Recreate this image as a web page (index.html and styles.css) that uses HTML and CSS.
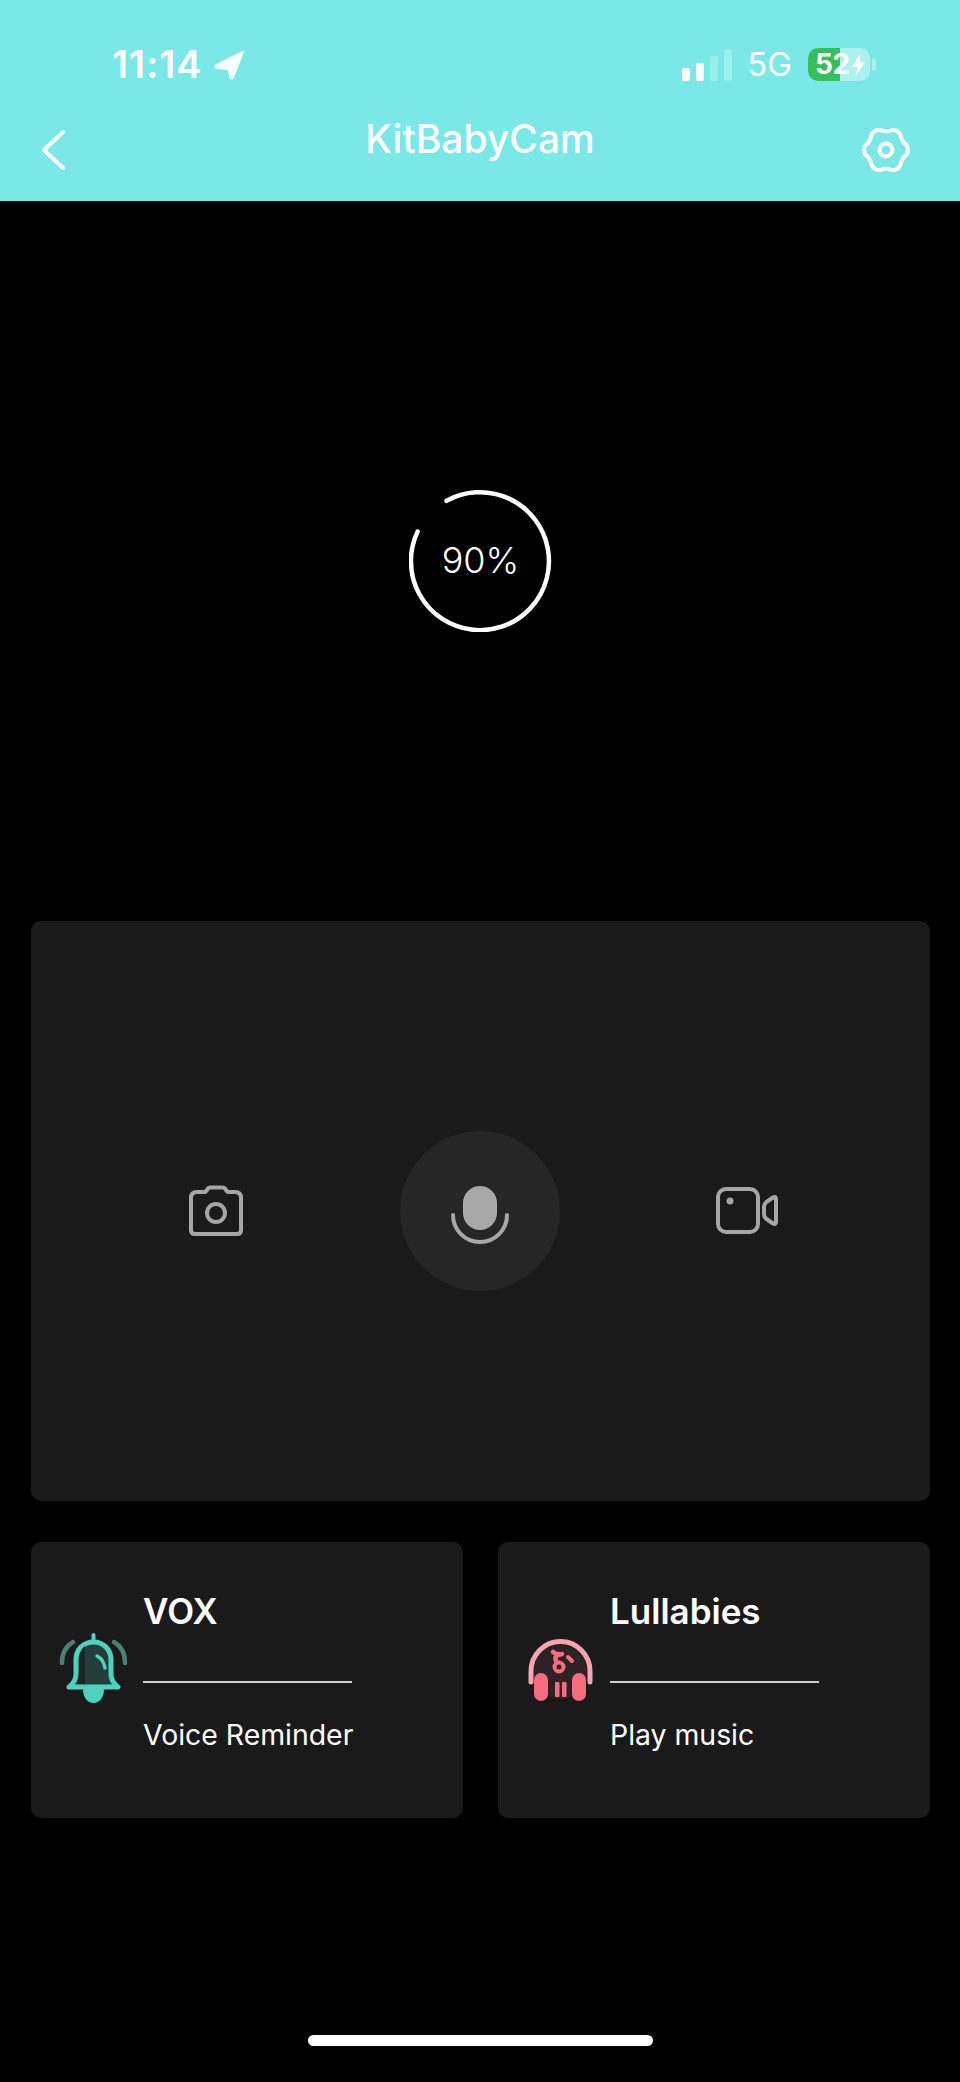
FILE: index.html
```html
<!DOCTYPE html>
<html lang="en">
<head>
<meta charset="utf-8">
<title>KitBabyCam</title>
<link rel="stylesheet" href="styles.css">
</head>
<body>
<div class="app">
  <header class="header">
    <div class="status">
      <div class="status-left">
        <span class="time">11:14</span>
        <svg class="loc" viewBox="0 0 32 30"><path d="M30 2 L3 15.5 Q1 17 3.5 18 L15.5 19 L17.5 27.5 Q18.500 29.500 20 27.500 Z" fill="#fff" stroke="#fff" stroke-width="2" stroke-linejoin="round"/></svg>
      </div>
      <div class="status-right">
        <div class="signal">
          <i class="bar b1"></i><i class="bar b2"></i><i class="bar b3 dim"></i><i class="bar b4 dim"></i>
        </div>
        <span class="net">5G</span>
        <div class="battery-wrap">
          <div class="battery">
            <div class="battery-fill"></div>
            <span class="battery-num">52</span>
            <svg class="bolt" viewBox="0 0 14 24"><path d="M9 0 L0 14 H6 L4 24 L14 9 H8 Z" fill="#fff"/></svg>
          </div>
          <i class="nub"></i>
        </div>
      </div>
    </div>
    <nav class="nav">
      <svg class="back" viewBox="0 0 26 44"><path d="M23 4 L4 22 L23 40" fill="none" stroke="#fff" stroke-width="4" stroke-linecap="round" stroke-linejoin="round"/></svg>
      <h1 class="title">KitBabyCam</h1>
      <svg class="gear" viewBox="0 0 48 48"><path d="M20.61 4.8 Q24 5.8 27.39 4.8 A8 8 0 0 1 38.94 11.47 Q40 14.75 42.32 17.33 A8 8 0 0 1 42.32 30.67 Q40 33.25 38.94 36.53 A8 8 0 0 1 27.39 43.2 Q24 42.2 20.61 43.2 A8 8 0 0 1 9.06 36.53 Q8 33.25 5.68 30.67 A8 8 0 0 1 5.68 17.33 Q8 14.75 9.06 11.47 A8 8 0 0 1 20.61 4.8Z" fill="none" stroke="#fff" stroke-width="4" stroke-linejoin="round"/><circle cx="24" cy="24" r="6.500" fill="none" stroke="#fff" stroke-width="4"/></svg>
    </nav>
  </header>

  <main class="main">
    <section class="ring-area">
      <div class="ring">
        <svg class="ring-svg" viewBox="0 0 144 144"><path d="M37.500 12.800 A69 69 0 1 1 8.600 43.600" fill="none" stroke="#fff" stroke-width="4.500" stroke-linecap="round"/></svg>
        <span class="ring-label">90%</span>
      </div>
    </section>

    <section class="panel">
      <svg class="cam" viewBox="0 0 60 60"><path d="M11 11 H18 Q20 11 21 9 Q22 6.500 25 6.500 H36 Q39 6.500 40 9 Q41 11 43 11 H49 Q55 11 55 17 V49 Q55 53 51 53 H9 Q5 53 5 49 V17 Q5 11 11 11Z" fill="none" stroke="#a6a6a6" stroke-width="4" stroke-linejoin="round"/><circle cx="30" cy="32" r="9" fill="none" stroke="#a6a6a6" stroke-width="4"/></svg>
      <div class="mic-btn">
        <svg class="mic" viewBox="0 0 64 64"><rect x="15" y="1" width="34" height="44" rx="17" fill="#a8a8a8"/><path d="M5 30 A27 27 0 0 0 59 30" fill="none" stroke="#a8a8a8" stroke-width="4" stroke-linecap="round"/></svg>
      </div>
      <svg class="vid" viewBox="0 0 66 60"><rect x="4" y="8" width="40" height="43" rx="8" fill="none" stroke="#a6a6a6" stroke-width="4"/><circle cx="16" cy="20" r="3.500" fill="#a6a6a6"/><path d="M50 26 Q50 23 52.500 21 L59 16.500 Q62 15 62 18 V41 Q62 44 59 42.500 L52.500 38 Q50 36 50 33 Z" fill="none" stroke="#a6a6a6" stroke-width="4" stroke-linejoin="round"/></svg>
    </section>

    <section class="cards">
      <article class="card">
        <svg class="card-icon" viewBox="0 0 80 80">
          <path d="M42.500 7 V14" stroke="#4fd1bd" stroke-width="4" stroke-linecap="round"/>
          <path d="M22 14 C15 18 11 26 11 35 M63 14 C70 18 74 26 74 35" fill="none" stroke="#4c7f76" stroke-width="4.500" stroke-linecap="round"/>
          <path d="M18 59 C22 56 25 52 25 46 V32 C25 21 33 14 42.500 14 C52 14 60 21 60 32 V46 C60 52 63 56 67 59 Z" fill="#233d39" stroke="#4fd1bd" stroke-width="5" stroke-linejoin="round"/>
          <path d="M28 32 C28 25 31 20 34 18 V56 H25 C27 52 28 48 28 44Z" fill="#1b2624"/>
          <path d="M46 28 C50 30 53 34 54 40" fill="none" stroke="#4fd1bd" stroke-width="3.500" stroke-linecap="round"/>
          <path d="M32 61 H53 C53 70 48 75 42.500 75 C37 75 32 70 32 61Z" fill="#4fd1bd"/>
        </svg>
        <div class="card-text">
          <h2 class="card-title">VOX</h2>
          <div class="card-rule"></div>
          <p class="card-sub">Voice Reminder</p>
        </div>
      </article>
      <article class="card">
        <svg class="card-icon" viewBox="0 0 80 80">
          <circle cx="42.500" cy="44" r="27" fill="#2e2226"/>
          <path d="M13 54 V43 A29.500 29.500 0 0 1 72 43 V54" fill="none" stroke="#f5a5b0" stroke-width="5" stroke-linecap="round"/>
          <rect x="16" y="45" width="14" height="28" rx="7" fill="#f56d81"/>
          <rect x="54" y="45" width="14" height="28" rx="7" fill="#f56d81"/>
          <rect x="37" y="54" width="4.500" height="15" rx="1" fill="#f56d81"/>
          <rect x="44" y="54" width="4.500" height="15" rx="1" fill="#f56d81"/>
          <path d="M35 24 Q40 28 44 26 M41 26 Q36 29 38 33" fill="none" stroke="#f56d81" stroke-width="4.500" stroke-linecap="round"/>
          <circle cx="41" cy="39" r="4.500" fill="none" stroke="#f56d81" stroke-width="4"/>
          <path d="M50 29 L54 33" stroke="#f56d81" stroke-width="4" stroke-linecap="round"/>
        </svg>
        <div class="card-text">
          <h2 class="card-title">Lullabies</h2>
          <div class="card-rule"></div>
          <p class="card-sub">Play music</p>
        </div>
      </article>
    </section>
  </main>

  <footer class="home"><div class="home-bar"></div></footer>
</div>
</body>
</html>
```

FILE: styles.css
```css
* { box-sizing: border-box; }

html, body {
  margin: 0;
  padding: 0;
  background: #000;
}

body {
  font-family: Inter, "Liberation Sans", sans-serif;
  color: #fff;
}

.app {
  width: 960px;
  height: 2082px;
  display: flex;
  flex-direction: column;
  overflow: hidden;
}

/* Header */
.header {
  height: 201px;
  flex: none;
  background: #7ae8e6;
  padding-top: 48px;
}

.status {
  height: 33px;
  display: flex;
  justify-content: space-between;
  align-items: center;
  padding: 0 84px 0 112px;
}

.status-left {
  display: flex;
  align-items: center;
  gap: 10px;
}

.time {
  font-size: 38px;
  line-height: 33px;
  font-weight: 600;
  letter-spacing: 1px;
}

.loc {
  width: 32px;
  height: 30px;
  display: block;
}

.status-right {
  display: flex;
  align-items: center;
}

.signal {
  display: flex;
  align-items: flex-end;
  gap: 6px;
  height: 33px;
}

.bar {
  display: block;
  width: 8px;
  border-radius: 2px;
  background: #fff;
}

.b1 { height: 13px; }
.b2 { height: 18px; }
.b3 { height: 25px; }
.b4 { height: 32px; }
.dim { opacity: 0.25; }

.net {
  margin-left: 15px;
  font-size: 33px;
  line-height: 33px;
  font-weight: 400;
}

.battery-wrap {
  margin-left: 16px;
  display: flex;
  align-items: center;
  gap: 2px;
}

.battery {
  position: relative;
  width: 62px;
  height: 33px;
  border-radius: 10px;
  overflow: hidden;
  background: rgba(255, 255, 255, 0.38);
  display: flex;
  align-items: center;
  padding-left: 7px;
}

.battery-fill {
  position: absolute;
  left: 0;
  top: 0;
  bottom: 0;
  width: 32px;
  background: #36bd5c;
}

.battery-num {
  position: relative;
  font-size: 28px;
  line-height: 33px;
  font-weight: 700;
  letter-spacing: -0.5px;
}

.bolt {
  position: relative;
  width: 13px;
  height: 22px;
  margin-left: 2px;
}

.nub {
  display: block;
  width: 4px;
  height: 12px;
  border-radius: 0 3px 3px 0;
  background: rgba(255, 255, 255, 0.38);
}

.nav {
  margin-top: 18px;
  height: 102px;
  display: grid;
  grid-template-columns: 1fr auto 1fr;
  align-items: center;
  padding: 0 40px;
}

.back {
  width: 26px;
  height: 44px;
  display: block;
}

.title {
  margin: 0 0 22px;
  font-size: 39px;
  line-height: 44px;
  font-weight: 500;
}

.gear {
  width: 48px;
  height: 48px;
  display: block;
  justify-self: end;
  margin-right: 10px;
}

/* Main */
.main {
  flex: 1;
  display: flex;
  flex-direction: column;
  padding: 0 30px 0 31px;
}

.ring-area {
  height: 720px;
  flex: none;
  display: flex;
  justify-content: center;
  align-items: center;
  padding-bottom: 2px;
}

.ring {
  position: relative;
  width: 144px;
  height: 144px;
  display: flex;
  align-items: center;
  justify-content: center;
}

.ring-svg {
  position: absolute;
  inset: 0;
  width: 144px;
  height: 144px;
}

.ring-label {
  font-size: 36px;
  line-height: 44px;
  font-weight: 300;
}

.panel {
  height: 580px;
  flex: none;
  background: #1a1a1a;
  border-radius: 10px;
  display: flex;
  justify-content: center;
  align-items: center;
  gap: 154px;
  padding-left: 5px;
}

.cam {
  width: 60px;
  height: 60px;
  display: block;
}

.mic-btn {
  width: 160px;
  height: 160px;
  border-radius: 50%;
  background: #262626;
  display: flex;
  align-items: center;
  justify-content: center;
}

.mic {
  width: 64px;
  height: 64px;
  display: block;
  margin-top: 12px;
}

.vid {
  width: 66px;
  height: 60px;
  display: block;
}

.cards {
  margin-top: 41px;
  display: flex;
  gap: 35px;
}

.card {
  flex: 1;
  height: 276px;
  background: #1a1a1a;
  border-radius: 10px;
  display: flex;
  align-items: flex-start;
  gap: 12px;
  padding: 49px 0 0 20px;
}

.card-icon {
  width: 80px;
  height: 80px;
  flex: none;
  display: block;
  margin-top: 37px;
}

.card-text {
  width: 209px;
}

.card-title {
  margin: 0;
  font-size: 35px;
  line-height: 40px;
  font-weight: 600;
}

.card-rule {
  margin-top: 50px;
  height: 2px;
  background: #cfcfcf;
}

.card-sub {
  margin: 35px 0 0;
  font-size: 28.4px;
  line-height: 34px;
  font-weight: 400;
  white-space: nowrap;
}

.home {
  height: 47px;
  flex: none;
  display: flex;
  justify-content: center;
  padding-bottom: 18px;
}

.home-bar {
  width: 345px;
  height: 11px;
  border-radius: 6px;
  background: #fff;
}
```
